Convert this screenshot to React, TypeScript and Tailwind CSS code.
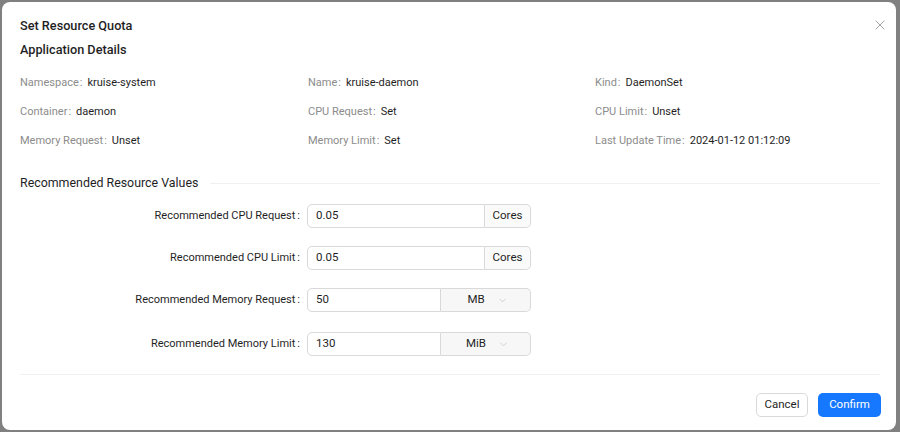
import React from 'react';
import { X, ChevronDown } from 'lucide-react';

const details: [string, string][] = [
  ['Namespace', 'kruise-system'],
  ['Name', 'kruise-daemon'],
  ['Kind', 'DaemonSet'],
  ['Container', 'daemon'],
  ['CPU Request', 'Set'],
  ['CPU Limit', 'Unset'],
  ['Memory Request', 'Unset'],
  ['Memory Limit', 'Set'],
  ['Last Update Time', '2024-01-12 01:12:09'],
];

function FormRow({ label, value, unit, select, className = '' }: { label: string; value: string; unit: string; select?: boolean; className?: string }) {
  return (
    <div className={`flex items-center h-[24px] ${className}`}>
      <div className="w-[287px] flex justify-end text-[11px] text-[#1f1f1f]">
        <span>{label}</span>
        <span className="ml-[2px] mr-[7px]">:</span>
      </div>
      <div className="flex h-[24px] w-[224px]">
        <div className={`${select ? 'w-[134px]' : 'w-[178px]'} h-full border border-[#d9d9d9] rounded-l-[5px] flex items-center px-[8px] text-[11.5px] text-[#1f1f1f]`}>
          {value}
        </div>
        {select ? (
          <div className="flex-1 h-full border border-l-0 border-[#d9d9d9] rounded-r-[5px] bg-[#f7f7f7] flex items-center justify-center gap-[12px] pl-[4px] text-[11.5px] text-[#1f1f1f]">
            <span>{unit}</span>
            <ChevronDown size={11} className="text-[#bfbfbf]" strokeWidth={1.5} />
          </div>
        ) : (
          <div className="flex-1 h-full border border-l-0 border-[#d9d9d9] rounded-r-[5px] bg-[#fafafa] flex items-center justify-center text-[11.5px] text-[#1f1f1f]">
            {unit}
          </div>
        )}
      </div>
    </div>
  );
}

export default function App() {
  return (
    <div className="w-[900px] h-[432px] bg-[#808080] pl-[2px] pt-[2px]" style={{ fontFamily: 'Roboto, "Noto Sans", sans-serif' }}>
      <div className="w-[894px] h-[428px] bg-white rounded-[8px] pl-[18px] pr-[16px] pt-[13px] flex flex-col">
        <div className="flex items-center justify-between h-[22px]">
          <h1 className="text-[12.7px] font-medium text-[#1f1f1f] leading-[22px]">Set Resource Quota</h1>
          <X size={16} strokeWidth={1.2} className="text-[#8c8c8c] mr-[-8px] mt-[-3px]" />
        </div>
        <h2 className="mt-[2px] text-[12.7px] font-medium text-[#1f1f1f] leading-[22px]">Application Details</h2>

        <div className="mt-[8px] grid grid-cols-[288px_287px_285px]">
          {details.map(([k, v]) => (
            <div key={k} className="h-[29px] flex items-center text-[11px]">
              <span className="text-[#8c8c8c]">{k}</span>
              <span className="text-[#8c8c8c] ml-[1px] mr-[5px]">:</span>
              <span className="text-[#1f1f1f]">{v}</span>
            </div>
          ))}
        </div>

        <div className="mt-[16px] h-[22px] flex items-center w-[860px]">
          <span className="text-[12.4px] text-[#1f1f1f]">Recommended Resource Values</span>
          <div className="flex-1 h-px bg-[#f0f0f0] ml-[12px]" />
        </div>

        <FormRow className="mt-[10px]" label="Recommended CPU Request" value="0.05" unit="Cores" />
        <FormRow className="mt-[18px]" label="Recommended CPU Limit" value="0.05" unit="Cores" />
        <FormRow className="mt-[18px]" label="Recommended Memory Request" value="50" unit="MB" select />
        <FormRow className="mt-[20px]" label="Recommended Memory Limit" value="130" unit="MiB" select />

        <div className="mt-[18px] h-px w-[860px] bg-[#f0f0f0]" />

        <div className="mt-[18px] w-[861px] flex justify-end gap-[10px]">
          <button className="h-[24px] w-[52px] rounded-[5px] border border-[#d9d9d9] bg-white text-[11.5px] text-[#1f1f1f]">Cancel</button>
          <button className="h-[24px] w-[63px] rounded-[5px] bg-[#1677ff] text-[11.5px] text-white">Confirm</button>
        </div>
      </div>
    </div>
  );
}
